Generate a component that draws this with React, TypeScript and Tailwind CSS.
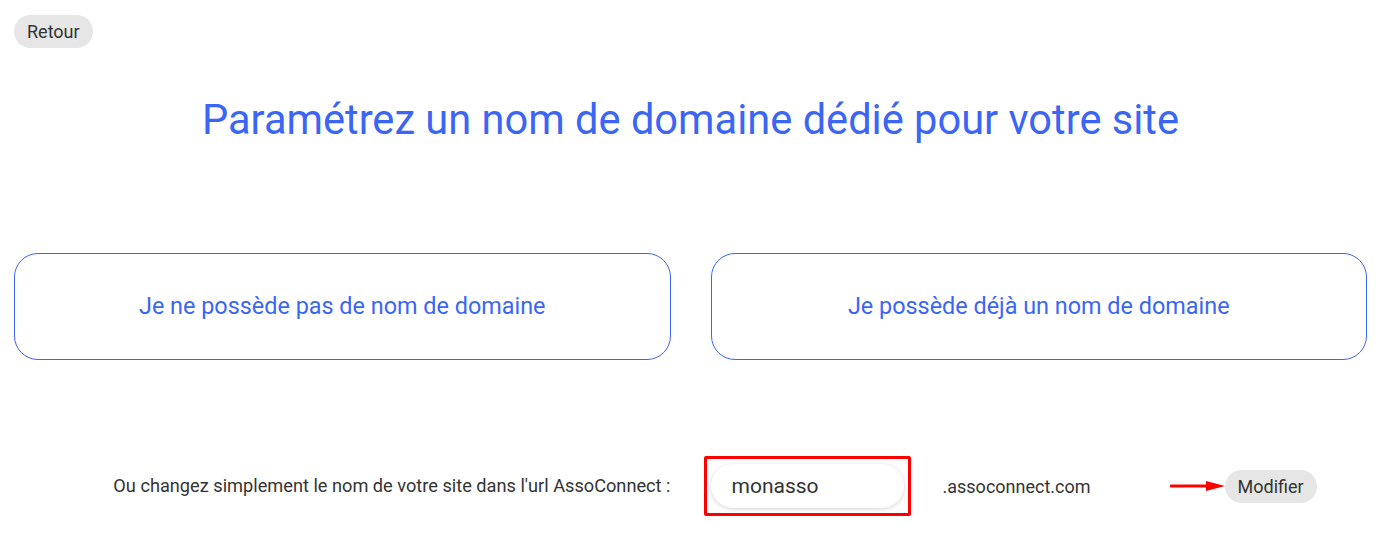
export default function App() {
  return (
    <div className="min-h-[540px] bg-white pl-[14px] pr-[18px] pt-[15px] font-['Roboto',sans-serif] text-[#333]">
      <button className="h-[33px] rounded-full bg-[#e6e6e6] px-[13px] text-[18px] text-[#333]">Retour</button>

      <h1 className="mt-[48px] text-center text-[41.6px] leading-[48px] text-[#3b66f5]">
        Paramétrez un nom de domaine dédié pour votre site
      </h1>

      <div className="mt-[109px] grid grid-cols-2 gap-[40px]">
        <button className="flex h-[107px] items-center justify-center rounded-[24px] border border-[#3b66f5] text-[23.4px] text-[#3b66f5]">
          Je ne possède pas de nom de domaine
        </button>
        <button className="flex h-[107px] items-center justify-center rounded-[24px] border border-[#3b66f5] text-[23.4px] text-[#3b66f5]">
          Je possède déjà un nom de domaine
        </button>
      </div>

      <div className="mt-[104px] grid grid-cols-2 gap-[40px]">
        <div className="flex items-center justify-end text-[18.2px]">
          Ou changez simplement le nom de votre site dans l'url AssoConnect :
        </div>
        <div className="flex items-center">
          <div className="relative">
            <input
              defaultValue="monasso"
              className="h-[44px] w-[193px] rounded-full bg-white px-[21px] text-[21px] text-[#333] shadow-[0_1px_4px_rgba(0,0,0,0.18)] outline-none"
            />
            <div className="pointer-events-none absolute -inset-x-[7px] -inset-y-[8px] rounded-[2px] border-[3px] border-[#ff0000]" />
          </div>
          <span className="ml-[39px] text-[18px]">.assoconnect.com</span>
          <svg className="ml-[79px]" width="55" height="12" viewBox="0 0 55 12">
            <line x1="1" y1="6" x2="38" y2="6" stroke="#f00" strokeWidth="3" strokeLinecap="round" />
            <polygon points="36,1 55,6 36,11" fill="#f00" />
          </svg>
          <button className="h-[33px] rounded-full bg-[#e6e6e6] px-[13px] text-[18px] text-[#333]">Modifier</button>
        </div>
      </div>
    </div>
  );
}
